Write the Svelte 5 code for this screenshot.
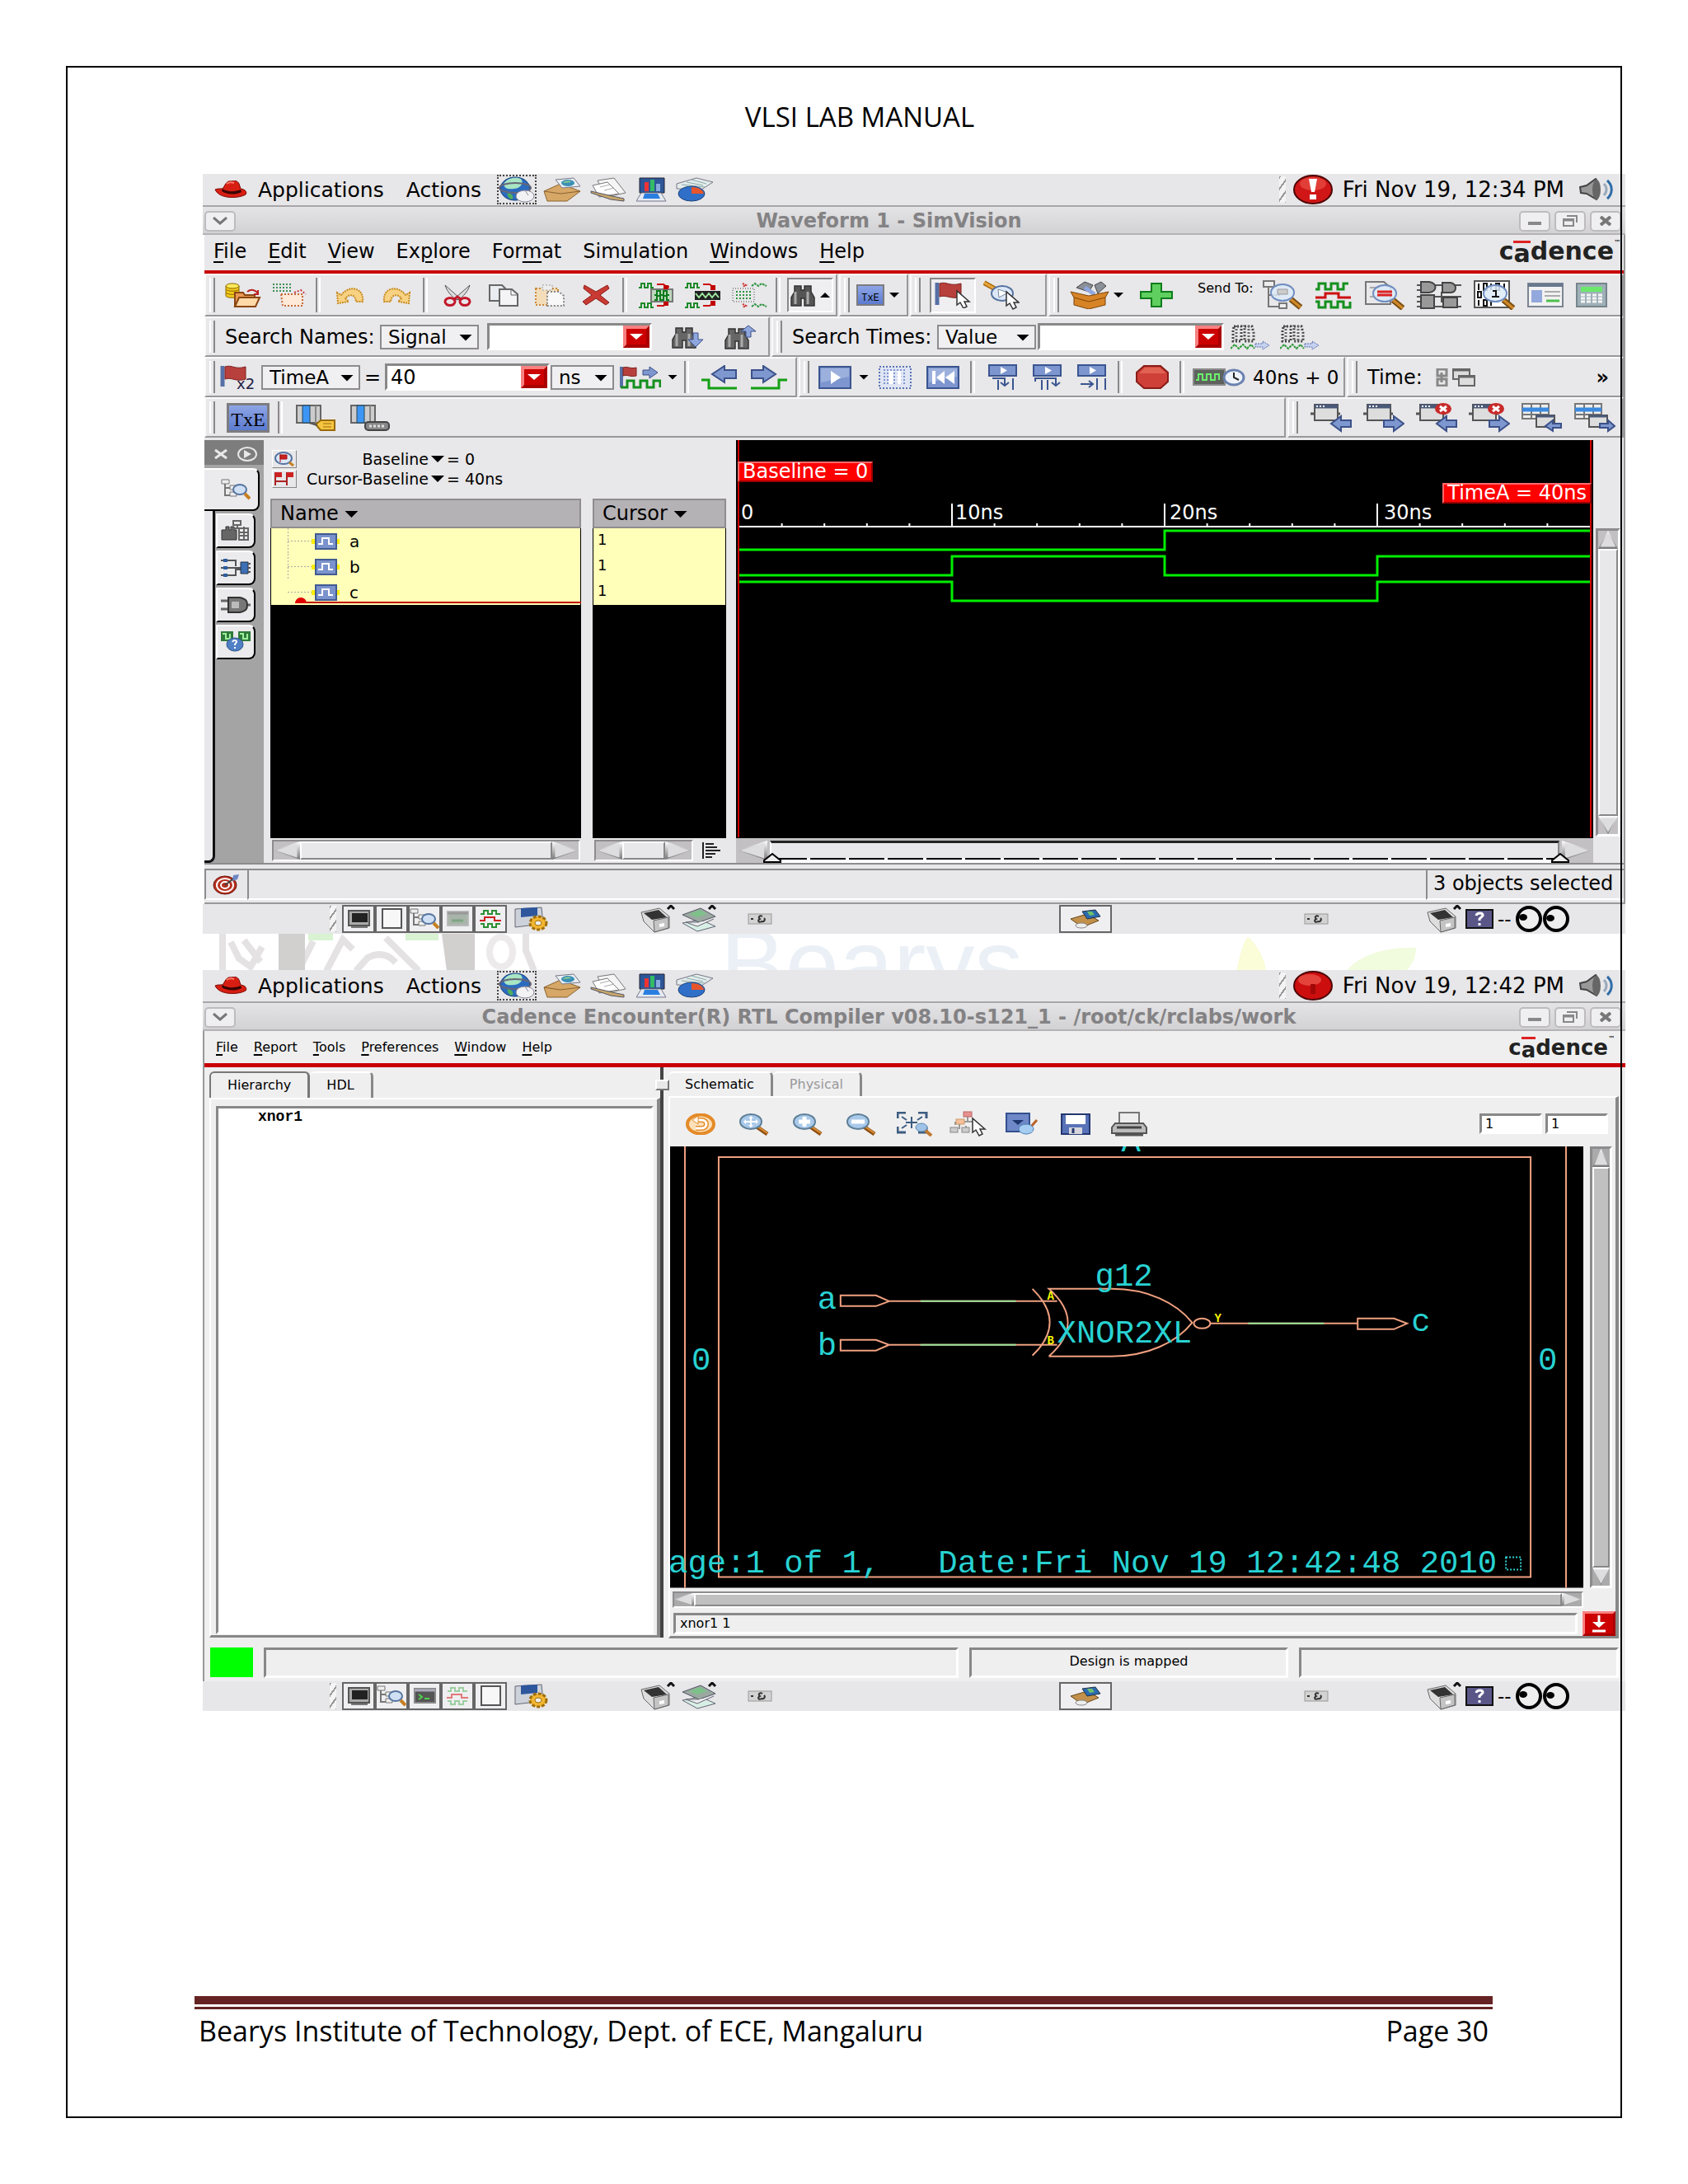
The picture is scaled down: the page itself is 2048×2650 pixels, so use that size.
<script>
  const wave = (x, y, c) => `<path d="M${x} ${y}h4v-7h8v7h7v-7h8v7h7v-7h6" fill="none" stroke="${c}" stroke-width="3"/>`;
  const miniWave = (x, y, c) => `<path d="M${x} ${y}h3v-5h4v5h4v-5h4v5h3" fill="none" stroke="${c}" stroke-width="2"/>`;
  const arrowR = (x, y) => `<path d="M${x} ${y + 5}h12v-5l12 9-12 9v-5h-12z" fill="#7f97cf" stroke="#3b5189" stroke-width="2"/>`;
  const arrowL = (x, y) => `<path d="M${x + 24} ${y + 5}h-12v-5l-12 9 12 9v-5h12z" fill="#7f97cf" stroke="#3b5189" stroke-width="2"/>`;
  const pointer = (x, y) => `<path d="M${x} ${y}v17l4-3 4 7 4-2-3-6h6z" fill="#fff" stroke="#333" stroke-width="1.5"/>`;
  const lens = (x, y) =>
    `<path d="M${x + 10} ${y + 8}l12 10" stroke="#7a4d12" stroke-width="7"/><path d="M${x + 10} ${y + 8}l12 10" stroke="#d08a2a" stroke-width="3"/><ellipse cx="${x}" cy="${y}" rx="14" ry="10" fill="#dceaf8" fill-opacity=".85" stroke="#6f8dc0" stroke-width="2"/>`;
  const binoculars = (c) =>
    `<path d="M5 3h8v5h4V3h8v7l4 7v10H17v-9h-4v9H1V17l4-7z" fill="${c}" stroke="#333" stroke-width="1.5"/><path d="M6 10v15M21 10v15" stroke="#aaa" stroke-width="3"/>`;
  const stepHead = `<rect x="1" y="1" width="33" height="13" fill="#7e96cf" stroke="#3a5590" stroke-width="2"/><path d="M15 3l8 4.5-8 4.5z" fill="#fff"/>`;
  const win = `<path d="M0 13h36" stroke="#555" stroke-width="3"/><rect x="5" y="2" width="28" height="19" fill="#ddd" stroke="#555" stroke-width="2"/><path d="M5 4h28" stroke="#4a5878" stroke-width="5"/><path d="M7 4h10" stroke="#fff" stroke-width="2" stroke-dasharray="2 2"/>`;
  const badge = `<ellipse cx="33" cy="7" rx="10" ry="7" fill="#c92a2a"/><path d="M29 4l8 6M37 4l-8 6" stroke="#fff" stroke-width="3"/>`;
  const tableWin = `<path d="M1 1h32v18H1zM1 14h32M12 1v18M23 1v18" fill="#eee" stroke="#777" stroke-width="2"/><path d="M1 8h32" stroke="#3b8ae0" stroke-width="5"/><rect x="18" y="15" width="22" height="14" fill="#ddd" stroke="#555" stroke-width="2"/><path d="M18 16h22" stroke="#4a5878" stroke-width="3"/>`;
  const cols = `<path d="M1 1h29v21H1z" fill="#ccc" stroke="#666" stroke-width="2"/><path d="M24 1v21" stroke="#888" stroke-width="2"/><path d="M8 1h9v21H8z" fill="#3d96f5" stroke="#245" stroke-width="1"/>`;
  const magnifier = (inner) =>
    `<path d="M22 17l13 9" stroke="#8d4f10" stroke-width="5"/><path d="M22 16l13 9" stroke="#dd8f35" stroke-width="2"/><ellipse cx="15" cy="11" rx="13" ry="9" fill="#a9c9ea" stroke="#5e7f96" stroke-width="2"/>${inner}`;
  const tree = `<path d="M7 6v26h14M7 18h14" fill="none" stroke="#777" stroke-width="2"/><rect x="1" y="1" width="13" height="7" fill="#eee" stroke="#777" stroke-width="2"/><rect x="20" y="28" width="9" height="6" fill="#eee" stroke="#777" stroke-width="2"/>`;

  // name: [width, height, shapes]
  const icons = {
    hat: [40, 22, `<path d="M1 11c4-2 8 0 10-2 3-6 5-9 10-8 3-2 8 0 9 3l2 6c6 1 8 4 6 7-8 5-32 6-37-6z" fill="#d81e12" stroke="#7c0a04"/><path d="M10 10c5 4 15 4 22 1l1 3c-8 4-18 3-24-1z" fill="#3a0502"/><path d="M15 4c3-2 6-2 9-1" stroke="#ff7a6a" stroke-width="2" fill="none"/>`],
    globe: [44, 32, `<ellipse cx="20" cy="15" rx="18" ry="14" fill="#2b6cc0" stroke="#123d77"/><path d="M6 9C10 2 20 0 27 3c4 5 0 11-8 12S7 15 6 9z" fill="#a8e6c4"/><path d="M11 20c6 1 8 5 5 8-4-1-6-5-5-8z" fill="#4fae5c"/><ellipse cx="20" cy="14" rx="19" ry="6" fill="none" stroke="#667" stroke-width="2"/><ellipse cx="32" cy="24" rx="11" ry="7" fill="#f2f2f5" stroke="#889"/><path d="M32 17l4 6" stroke="#889"/>`],
    mail: [48, 30, `<path d="M2 17l20-9 24 9-16 12-24 0z" fill="#d6a766" stroke="#8a6330"/><path d="M2 17l20 3 24-3" stroke="#8a6330" fill="none"/><path d="M16 3l22-2 8 10-22 2z" fill="#e8eef2" stroke="#778"/><ellipse cx="31" cy="7" rx="8" ry="4" fill="#3b8fb8"/><path d="M25 7c3-3 8-3 10-1z" fill="#8fd08a"/>`],
    writer: [48, 30, `<path d="M10 4l20-3 14 18-24 5z" fill="#f5f5f5" stroke="#777"/><path d="M4 10l18-4 14 14-24 4z" fill="#fff" stroke="#777"/><path d="M2 17l26 6 14 3v3l-16-2L2 19z" fill="#c8a86a" stroke="#556"/><path d="M13 12l12-3M18 16l12-3" stroke="#aaa"/>`],
    impress: [38, 30, `<path d="M4 1h30v18H4z" fill="#2d5698" stroke="#223"/><path d="M10 6h5v11h-5z" fill="#e33"/><path d="M17 3h5v14h-5z" fill="#3b6"/><path d="M24 8h5v9h-5z" fill="#8ad"/><path d="M6 19h24l6 10H0z" fill="#e4eaf2" stroke="#778"/><path d="M10 20h16l3 6H8z" fill="#2a7ee0"/>`],
    calc: [46, 30, `<path d="M2 8L26 1l20 5-14 9-30-1z" fill="#e4ecec" stroke="#778"/><path d="M8 9l28 3M14 6l20 4M20 3l18 5" stroke="#8aa"/><ellipse cx="20" cy="20" rx="16" ry="9" fill="#2f6fc8" stroke="#1c437a"/><path d="M20 20V12c8 0 14 3 15 8z" fill="#e8552b"/>`],
    alert: [48, 36, `<ellipse cx="24" cy="18" rx="23" ry="17" fill="#d01616" stroke="#4d0505" stroke-width="2"/><ellipse cx="24" cy="11" rx="16" ry="8" fill="#ee5a50" opacity=".6"/><path d="M19 5h10l-3 16h-4z" fill="#fff"/><rect x="20" y="24" width="8" height="6" fill="#fff"/>`],
    alertDim: [48, 36, `<ellipse cx="24" cy="18" rx="23" ry="17" fill="#cc0e0e" stroke="#4d0505" stroke-width="2"/><ellipse cx="20" cy="11" rx="14" ry="7" fill="#ee5a50" opacity=".7"/><path d="M21 16h6v12h-6z" fill="#a30808"/>`],
    speaker: [42, 28, `<path d="M1 11l8-2L20 1c4 4 5 20 1 25L9 19l-7-1z" fill="#999" stroke="#444" stroke-width="2"/><ellipse cx="21" cy="14" rx="5" ry="12" fill="#666"/><path d="M30 7c4 4 4 10 0 14" stroke="#9ab" stroke-width="3" fill="none"/><path d="M34 3c7 6 7 16 0 22" stroke="#2f6ca8" stroke-width="3" fill="none"/>`],
    openDb: [44, 30, `<path d="M1 4v12c0 3 16 3 16 0V4" fill="#f4c81a" stroke="#8a6a00"/><path d="M1 8c2 3 14 3 16 0M1 12c2 3 14 3 16 0" fill="none" stroke="#8a6a00"/><ellipse cx="9" cy="4" rx="8" ry="3" fill="#ffe95a" stroke="#8a6a00"/><path d="M12 12h10l2 3h12v13H12z" fill="#e89a55" stroke="#8a4512" stroke-width="2"/><path d="M17 18h25l-5 11H12z" fill="#ffd9a8" stroke="#8a4512" stroke-width="2"/><path d="M27 11c5-4 10-2 13 2m0-4v5h-5" stroke="#b22" stroke-width="2" fill="none"/>`],
    reload: [44, 30, `<path d="M2 2h22M2 6h22M2 10h22" stroke="#3f8f58" stroke-width="2" stroke-dasharray="2 2"/><path d="M12 14h26v14H14z" fill="#ffe9d8" stroke="#c86a3a" stroke-width="2" stroke-dasharray="2 2"/><path d="M28 12l8-3 6 5" stroke="#c33" stroke-width="2" stroke-dasharray="2 2" fill="none"/>`],
    undo: [36, 24, `<path d="M2 9l1 13 13-2-4-4c5-6 12-5 13 4h8C35 3 17-1 7 12z" fill="#f8d283" stroke="#c98c20" stroke-width="2" stroke-dasharray="2 1"/>`],
    redo: [36, 24, `<path d="M34 9l-1 13-13-2 4-4c-5-6-12-5-13 4H3C1 3 19-1 29 12z" fill="#f8d283" stroke="#c98c20" stroke-width="2" stroke-dasharray="2 1"/>`],
    cut: [34, 27, `<path d="M2 1l18 16-4 2C10 15 4 8 2 1zM32 1L14 17l4 2C24 15 30 8 32 1z" fill="#ddd" stroke="#555"/><ellipse cx="8" cy="21" rx="6" ry="4.5" fill="none" stroke="#c3182a" stroke-width="3"/><ellipse cx="26" cy="21" rx="6" ry="4.5" fill="none" stroke="#c3182a" stroke-width="3"/><path d="M13 18l4-3 4 3" stroke="#c3182a" stroke-width="3" fill="none"/>`],
    copy: [36, 27, `<path d="M1 1h15l5 5v14H1z" fill="#e9ecf0" stroke="#666" stroke-width="2"/><path d="M13 6h15l7 6v14H13z" fill="#f4f4f6" stroke="#666" stroke-width="2"/><path d="M27 6v7h8" fill="none" stroke="#666"/>`],
    paste: [36, 27, `<path d="M1 5h27v20H1z" fill="#f3dcb8" stroke="#c98a3a" stroke-width="2" stroke-dasharray="2 2"/><path d="M9 1h12v6H9z" fill="#eee" stroke="#999" stroke-dasharray="2 2"/><path d="M15 9h14l6 5v12H15z" fill="#f8f8f8" stroke="#888" stroke-width="2" stroke-dasharray="2 2"/>`],
    remove: [34, 26, `<path d="M3 1l14 8L31 1l2 4-11 8 11 9-4 3-12-8-12 8-4-4 11-8L2 5z" fill="#c83a32" stroke="#8c1d18"/>`],
    sendIn: [44, 32, `${miniWave(0, 7, '#1d8a2a')}${miniWave(0, 31, '#1d8a2a')}<rect x="15" y="9" width="26" height="15" fill="#bcd8bc" stroke="#777" stroke-width="2"/>${miniWave(19, 16, '#0a7a1a')}${miniWave(19, 22, '#0a7a1a')}<path d="M22 3h8l4 3h3M22 29h8l4-3" stroke="#c11" stroke-width="2" fill="none"/><path d="M30 4h6v5h-6zM30 24h6v5h-6z" fill="#c00000"/>`],
    sendOut: [44, 32, `${miniWave(0, 7, '#1d8a2a')}${miniWave(0, 31, '#1d8a2a')}<rect x="12" y="11" width="31" height="11" fill="#222"/><path d="M13 14l4 5 4-5 4 5 4-5 4 5 4-5 4 5" stroke="#9fe89f" stroke-width="2" fill="none"/><path d="M22 3h8l4 3M22 29h8l4-3" stroke="#c11" stroke-width="2" fill="none"/><path d="M31 4h6v6h-6zM31 23h6v6h-6z" fill="#c00000"/>`],
    sendDim: [44, 32, `<rect x="2" y="8" width="26" height="16" fill="none" stroke="#444" stroke-width="1" stroke-dasharray="1 2"/><path d="M6 12h20M6 16h20M6 20h20" stroke="#2c9440" stroke-width="2" stroke-dasharray="2 2"/><path d="M25 5l4-3 4 3 4-3 6 3M25 30l4-3 4 3 4-3 6 3" stroke="#2c9440" stroke-width="2" stroke-dasharray="3 1" fill="none"/><path d="M14 2l4 2-4 2M14 27l4 2-4 2" stroke="#c33" stroke-width="2" stroke-dasharray="2 1" fill="none"/>`],
    find: [30, 28, binoculars('#555')],
    findDown: [40, 28, `${binoculars('#666')}<path d="M26 9h6v8h6l-9 9-9-9h6z" fill="#8fa7dd" stroke="#3b5189"/>`],
    findUp: [40, 30, `<g transform="translate(0 2)">${binoculars('#666')}</g><path d="M26 15h6V8h6l-9-7-9 7h6z" fill="#8fa7dd" stroke="#3b5189"/>`],
    flagSel: [44, 32, `<path d="M3 1v27" stroke="#5670a5" stroke-width="5"/><path d="M6 2c8-3 12 4 26 0v16c-12 4-18-3-26 0z" fill="#b8403c" stroke="#7d2020"/>${pointer(27, 11)}`],
    lensSel: [44, 36, `<path d="M1 3l16 9" stroke="#a86a10" stroke-width="6"/><path d="M1 3l14 8" stroke="#e9a63a" stroke-width="3"/><ellipse cx="23" cy="16" rx="13" ry="9" fill="#dce8f8" stroke="#55739f" stroke-width="2"/><path d="M18 11l12 4-11 6z" fill="#fff" stroke="#789"/>${pointer(28, 14)}`],
    toolbox: [48, 34, `<path d="M8 8l10-7 10 4-5 8zM30 5l8-4 6 5-10 9z" fill="#8a8f98" stroke="#444"/><path d="M18 8l12 8" stroke="#8fa7e0" stroke-width="5"/><path d="M1 13l22 5 24-5-4 7v9l-20 5-18-5v-9z" fill="#d78427" stroke="#7d4508"/><path d="M5 20l18 5 20-5" stroke="#7d4508" fill="none"/>`],
    plus: [40, 30, `<path d="M14 1h12v10h13v8H26v10H14V19H1v-8h13z" fill="#5fcf5f" stroke="#0f7d1c" stroke-width="2"/>`],
    schemTree: [48, 36, `${tree}${lens(24, 15)}<path d="M18 11h12v6H18z" fill="#ccc" stroke="#999"/>`],
    waves: [46, 34, `${wave(1, 10, '#14901e')}<path d="M1 20h12v-5h16v5h15" fill="none" stroke="#cc1111" stroke-width="3"/><path d="M1 25h4v7h8v-7h7v7h8v-7h7v7h8v-7" fill="none" stroke="#14901e" stroke-width="3"/>`],
    docLens: [48, 36, `<path d="M1 2h22l8 7v20H1z" fill="#e8e8ea" stroke="#777" stroke-width="2"/><path d="M6 9h12M6 20h12" stroke="#aaa" stroke-width="2"/>${lens(24, 16)}<path d="M15 14h18M15 18h18" stroke="#d22" stroke-width="3"/>`],
    gates: [54, 34, `<path d="M0 5h54M0 11h20M0 19h54M0 25h20M0 31h54M30 13v13" stroke="#555" stroke-width="2"/><path d="M5 1h10c10 2 10 11 0 13H5zM31 2h10c8 2 8 11 0 12H31z" fill="#999" stroke="#444" stroke-width="2"/><path d="M5 17h16v16H5zM32 20h17v12H32z" fill="#999" stroke="#444" stroke-width="2"/>`],
    bits: [50, 36, `<rect x="1" y="1" width="42" height="32" fill="#fff" stroke="#555" stroke-width="2"/><path d="M6 4v8M12 4h4v8h-4zM21 4v8M27 4h4v8h-4zM37 4v8M5 14h4v7H5zM6 24v7M12 24h4v7h-4zM21 24v7" fill="none" stroke="#111" stroke-width="2"/>${lens(26, 16)}<path d="M23 13h4v7M22 20h9" stroke="#111" stroke-width="2" fill="none"/>`],
    form: [44, 30, `<rect x="1" y="1" width="42" height="28" fill="#f2f2f2" stroke="#7a8594" stroke-width="2"/><path d="M1 3h42" stroke="#68788e" stroke-width="4"/><rect x="5" y="9" width="13" height="15" fill="#93a8dc"/><path d="M21 11h19M21 16h19" stroke="#666"/><path d="M23 22h16" stroke="#4cc04c" stroke-width="3"/>`],
    pocketCalc: [38, 30, `<rect x="1" y="1" width="36" height="28" fill="#9fb0b8" stroke="#77858c" stroke-width="2"/><rect x="6" y="5" width="26" height="6" fill="#6be86b"/><path d="M6 15h26M6 19h26M6 23h26" stroke="#f4f4f4" stroke-width="3" stroke-dasharray="5 2"/>`],
    findDim: [48, 32, `<path d="M4 3h9v18H3V9zM17 3h9l2 8v10H17z" fill="none" stroke="#444" stroke-width="3" stroke-dasharray="2 2"/><path d="M7 2v18M22 2v18" stroke="#666" stroke-width="3" stroke-dasharray="2 2"/><path d="M0 30l5-5 5 5 5-5 5 5 5-5 4 5" stroke="#2b9a38" stroke-width="2" fill="none" stroke-dasharray="3 1"/><path d="M30 24h9v-3l8 5-8 5v-3h-9z" stroke="#5670b0" stroke-dasharray="2 1" fill="#c7d2f0"/>`],
    flag2: [32, 30, `<path d="M3 1v25" stroke="#5670a5" stroke-width="5"/><path d="M6 2c8-3 12 4 25 0v15c-12 4-17-3-25 0z" fill="#b8403c" stroke="#7d2020"/>`],
    flagWave: [50, 28, `<path d="M2 1v25" stroke="#5670a5" stroke-width="4"/><path d="M4 2c6-2 8 2 16 0v10c-8 2-10-2-16 0z" fill="#b8403c" stroke="#7d2020"/><path d="M28 5h8V1l10 7-10 7v-4h-8z" fill="#7f97cf" stroke="#3b5189"/><path d="M1 26h8v-8h8v8h8v-8h8v8h8v-8h8v8" stroke="#14901e" stroke-width="3" fill="none"/>`],
    edgeL: [44, 30, `<path d="M0 18h9v10h34" stroke="#12a012" stroke-width="3" fill="none"/><path d="M42 6H28V1L13 11l15 10v-5h14z" fill="#7f97cf" stroke="#3b5189" stroke-width="2"/>`],
    edgeR: [44, 30, `<path d="M0 28h34V18h10" stroke="#12a012" stroke-width="3" fill="none"/><path d="M1 6h14V1l15 10-15 10v-5H1z" fill="#7f97cf" stroke="#3b5189" stroke-width="2"/>`],
    play: [40, 28, `<rect x="1" y="1" width="38" height="26" fill="#7e96cf" stroke="#3a5590" stroke-width="2"/><path d="M3 3h34v10L3 20z" fill="#a9bae2" opacity=".7"/><path d="M15 6l12 8-12 8z" fill="#fff"/>`],
    pause: [40, 28, `<rect x="1" y="1" width="38" height="26" fill="#dfe5f4" stroke="#5a74b4" stroke-width="2" stroke-dasharray="2 2"/><path d="M6 5h28M6 9h28M6 13h28M6 17h28M6 21h28" stroke="#7e96cf" stroke-width="2" stroke-dasharray="2 2"/><path d="M15 6v16M25 6v16" stroke="#fff" stroke-width="5"/>`],
    rewind: [40, 28, `<rect x="1" y="1" width="38" height="26" fill="#7e96cf" stroke="#3a5590" stroke-width="2"/><path d="M3 3h34v10L3 20z" fill="#a9bae2" opacity=".7"/><path d="M9 6v16" stroke="#fff" stroke-width="4"/><path d="M22 6L12 14l10 8zM34 6l-11 8 11 8z" fill="#fff"/>`],
    stepIn: [36, 32, `${stepHead}<path d="M5 17h15v8m-5-3l5 4 5-4M12 19v12M30 17v14" stroke="#3a5590" stroke-width="2" fill="none"/>`],
    stepOver: [36, 32, `${stepHead}<path d="M3 21v-4h25v8m-5-3l5 4 5-4M11 19v12M18 19v12" stroke="#3a5590" stroke-width="2" fill="none"/>`],
    stepTo: [36, 32, `${stepHead}<path d="M4 24h14m-4-4l5 4-5 4M24 17v14M34 17v14" stroke="#3a5590" stroke-width="2" fill="none"/>`],
    stop: [40, 29, `<path d="M10 1h20l9 8v11l-9 8H10l-9-8V9z" fill="#cf4038" stroke="#8a1d18" stroke-width="2"/><path d="M11 3h18l8 7H4z" fill="#e8705f" opacity=".7"/>`],
    clock: [64, 24, `<rect x="1" y="2" width="38" height="19" fill="#5d625d" stroke="#8a8a8a" stroke-width="2"/><path d="M4 15h3V8h5v7h5V8h5v7h5V8h5v7" stroke="#6bf06b" stroke-width="2" fill="none"/><ellipse cx="50" cy="12" rx="12" ry="9" fill="#eef2fb" stroke="#6b82b0" stroke-width="3"/><path d="M50 6v6l6 3" stroke="#222" stroke-width="2" fill="none"/>`],
    links: [48, 22, `<path d="M2 1h11v8H2zM2 13h11v8H2zM7 5v12" fill="none" stroke="#888" stroke-width="3"/><rect x="21" y="1" width="20" height="12" fill="#ddd" stroke="#666" stroke-width="2"/><rect x="28" y="9" width="19" height="12" fill="#ddd" stroke="#666" stroke-width="2"/><path d="M21 2h20M28 10h19" stroke="#666" stroke-width="3"/>`],
    colTag: [48, 32, `${cols}<path d="M24 24l6-5h17v12H30z" fill="#f5c542" stroke="#9a6a08" stroke-width="2"/><path d="M16 22l10 3" stroke="#555" stroke-width="2"/><path d="M33 23h10M33 27h10" stroke="#9a6a08"/>`],
    colLabel: [48, 32, `${cols}<rect x="18" y="21" width="29" height="10" rx="4" fill="#888" stroke="#444" stroke-width="2"/><path d="M23 26h18" stroke="#ddd" stroke-width="3" stroke-dasharray="3 2"/>`],
    winL: [50, 36, `${win}${arrowL(25, 16)}`],
    winR: [50, 36, `${win}${arrowR(25, 16)}`],
    winXL: [50, 36, `${win}${badge}${arrowL(25, 16)}`],
    winXR: [50, 36, `${win}${badge}${arrowR(25, 16)}`],
    tabL: [50, 36, `${tableWin}<path d="M48 25H38v-4l-9 7 9 6v-4h10z" fill="#7f97cf" stroke="#3b5189" stroke-width="2"/>`],
    tabR: [50, 36, `${tableWin}<path d="M31 25h10v-4l8 7-8 6v-4H31z" fill="#7f97cf" stroke="#3b5189" stroke-width="2"/>`],
    sideTree: [36, 26, `<path d="M5 4v16h14M5 11h14" fill="none" stroke="#777" stroke-width="2"/><path d="M1 1h9v5H1zM11 8h8v5h-8zM11 16h8v5h-8z" fill="#eee" stroke="#777"/><ellipse cx="23" cy="13" rx="8" ry="6" fill="#cfe0f5" stroke="#55739f" stroke-width="2"/><path d="M29 18l6 6" stroke="#c77f1f" stroke-width="4"/>`],
    sideFind: [36, 26, `<path d="M1 12h5V8h4v4h2V8h4v4h3v12H1z" fill="#666" stroke="#333"/><path d="M15 1h9v5h-9zM20 6v4M12 10h16v-2M22 10h11v14H22zM22 15h11M22 19h11M28 10v14" fill="none" stroke="#666" stroke-width="2"/>`],
    sideNet: [36, 26, `<path d="M0 4h18v7M0 13h24M0 22h18v-7h6" stroke="#555" stroke-width="2" fill="none"/><path d="M3 2h5v4H3zM3 11h5v4H3zM3 20h5v4H3z" fill="#2e5e9e"/><path d="M24 6h9v14h-9z" fill="#3e6fb5" stroke="#234"/><path d="M33 8h3M33 13h3M33 18h3" stroke="#555" stroke-width="2"/>`],
    sideGate: [36, 20, `<path d="M0 5h10M0 15h10M31 10h5" stroke="#666" stroke-width="3"/><path d="M9 1h14c8 2 9 4 9 9s-1 7-9 9H9z" fill="#777" stroke="#333" stroke-width="2"/><rect x="13" y="6" width="9" height="8" fill="#bbb"/>`],
    sideHelp: [36, 28, `<rect x="0" y="1" width="15" height="12" fill="#2f7a3a"/><rect x="21" y="1" width="15" height="12" fill="#2f7a3a"/><path d="M2 4h4v6h5V4M23 4h4v6h5V4" stroke="#9df09d" fill="none" stroke-width="2"/><ellipse cx="17" cy="17" rx="10" ry="8" fill="#4f7fc4" stroke="#2d5488"/><path d="M14 14c1-3 6-2 5 0l-2 3v1M17 20v2" stroke="#fff" stroke-width="2" fill="none"/>`],
    zoomFlag: [26, 18, `<ellipse cx="12" cy="8" rx="10" ry="7" fill="#dce8f8" stroke="#55739f" stroke-width="2"/><path d="M8 3v10M8 4h8v5H8z" fill="#c22" stroke="#a11"/><path d="M19 13l5 4" stroke="#c77f1f" stroke-width="3"/>`],
    flags: [26, 18, `<path d="M2 1v16M16 1v16M2 12h14" stroke="#a22" stroke-width="2" fill="none"/><path d="M2 1h8v6H2zM16 1h8v6h-8z" fill="#c22"/>`],
    signal: [34, 20, `<path d="M0 7h4v6H0zM30 7h4v6h-4z" fill="#ffee00"/><rect x="5" y="1" width="25" height="18" fill="#7b93cc" stroke="#415a92" stroke-width="2"/><path d="M8 13h5V6h8v7h5" fill="none" stroke="#fff" stroke-width="2"/>`],
    scrollMode: [24, 20, `<path d="M1 0v20M4 2h10M4 6h14M4 10h18M4 14h12M4 18h8" stroke="#222" stroke-width="2"/>`],
    target: [34, 26, `<ellipse cx="15" cy="14" rx="14" ry="11" fill="#b5301f" stroke="#6d130b"/><ellipse cx="15" cy="14" rx="10" ry="8" fill="none" stroke="#fff" stroke-width="2"/><ellipse cx="15" cy="14" rx="5" ry="4" fill="none" stroke="#fff" stroke-width="2"/><path d="M15 14L28 4" stroke="#444" stroke-width="2"/><path d="M25 2l7-1-2 6-6 2z" fill="#6c86c4"/>`],
    term: [28, 22, `<rect x="2" y="1" width="25" height="18" fill="#aaa" stroke="#555" stroke-width="2"/><rect x="6" y="4" width="19" height="11" fill="#222"/><path d="M5 21h20" stroke="#777" stroke-width="2"/>`],
    page: [28, 26, `<rect x="3" y="1" width="23" height="23" fill="#f7f7f7" stroke="#555" stroke-width="2"/>`],
    termGreen: [28, 20, `<rect x="2" y="1" width="25" height="17" fill="#555" stroke="#888" stroke-width="2"/><path d="M2 3h25" stroke="#aab" stroke-width="3"/><path d="M7 8l4 3-4 3M14 13h6" stroke="#4fd14f" stroke-width="2" fill="none"/>`],
    termDim: [28, 20, `<rect x="2" y="1" width="25" height="17" fill="#a8b4aa" stroke="#bbb" stroke-width="2"/><path d="M2 3h25" stroke="#999" stroke-width="3"/><path d="M7 12h14" stroke="#7fa584" stroke-width="3"/>`],
    waveTask: [28, 24, `<path d="M2 6h4V2h5v4h5V2h5v4h5" stroke="#2a8f34" stroke-width="2" fill="none"/><path d="M1 14h6v-4h12v4h8" stroke="#c22" stroke-width="2" fill="none"/><path d="M2 18h4v4h5v-4h5v4h5v-4h5" stroke="#2a8f34" stroke-width="2" fill="none"/>`],
    waveDim: [28, 24, `<path d="M2 6h4V2h5v4h5V2h5v4h5" stroke="#9ccfa2" stroke-width="2" fill="none"/><path d="M1 14h6v-4h12v4h8" stroke="#e07a7a" stroke-width="2" fill="none"/><path d="M2 18h4v4h5v-4h5v4h5v-4h5" stroke="#9ccfa2" stroke-width="2" fill="none"/>`],
    gearDisk: [44, 30, `<path d="M3 3l32-2 2 20-34 4z" fill="#cdd2da" stroke="#667"/><path d="M10 2l20-1v10l-20 2z" fill="#2d569c"/><ellipse cx="31" cy="20" rx="10" ry="8" fill="#f2b632" stroke="#a06e08" stroke-width="3" stroke-dasharray="4 2"/><ellipse cx="31" cy="20" rx="4" ry="3" fill="#eee" stroke="#a06e08"/>`],
    drawer: [42, 34, `<path d="M1 9l22-5 12 10v14l-18 5L4 20z" fill="#ddd" stroke="#666"/><path d="M4 10l18-4 10 9-18 3z" fill="#333"/><path d="M16 19l18-4v13l-17 5z" fill="#c4c4c4" stroke="#666"/><path d="M23 23l6-1v4l-6 1z" fill="#fff"/><path d="M33 5l4-4 4 4" stroke="#111" stroke-width="3" fill="none"/>`],
    papers: [44, 34, `<path d="M2 22l22-4 18 8-22 6z" fill="#d8efe6" stroke="#667"/><path d="M2 12L24 4l18 10-20 7z" fill="#9aa8a0" stroke="#556"/><path d="M10 11l13-5 9 5-12 4z" fill="#7ec08a"/><path d="M22 21l-16 0 14 5 20-9" fill="#eee" stroke="#667"/><path d="M34 5l4-4 4 4" stroke="#111" stroke-width="3" fill="none"/>`],
    plug: [30, 14, `<rect x="1" y="1" width="28" height="12" fill="#d2d2d2" stroke="#999"/><path d="M4 7h3M18 4c-3-2-6 1-3 3-4 2-1 5 2 3 3 1 5-2 3-4" stroke="#333" stroke-width="2" fill="none"/>`],
    desk: [40, 24, `<path d="M2 12l20-6 14 8-20 8z" fill="#c2904a" stroke="#66471c"/><path d="M16 3l16-2 6 8-16 3z" fill="#2b6ab0" stroke="#234"/><path d="M22 3l6 0 3 4-6 1z" fill="#6fc06f"/><ellipse cx="15" cy="20" rx="7" ry="3" fill="#eee" stroke="#888"/>`],
    help: [34, 24, `<rect x="1" y="1" width="32" height="22" fill="#5a5788" stroke="#111" stroke-width="2"/><path d="M13 8c1-4 9-4 8 0l-4 4v2M17 17v3" stroke="#fff" stroke-width="3" fill="none"/>`],
    eyes: [66, 32, `<ellipse cx="16" cy="16" rx="14" ry="14" fill="#eee" stroke="#000" stroke-width="4"/><ellipse cx="49" cy="16" rx="14" ry="14" fill="#eee" stroke="#000" stroke-width="4"/><ellipse cx="9" cy="14" rx="5" ry="4"/><ellipse cx="42" cy="15" rx="5" ry="4"/>`],
    back: [36, 26, `<ellipse cx="18" cy="13" rx="16" ry="11.5" fill="#fbe0b8" stroke="#e48a28" stroke-width="4"/><path d="M13 8h6c8 0 8 10 0 10h-7" stroke="#e48a28" stroke-width="6" fill="none"/><path d="M13 8h6c8 0 8 10 0 10h-7" stroke="#fff" stroke-width="3" fill="none"/><path d="M15 3L8 8l7 5z" fill="#fff" stroke="#e48a28"/>`],
    zoomFit: [38, 28, magnifier('<path d="M8 11h14M15 6v10" stroke="#fff" stroke-width="2"/><path d="M12 7l3-3 3 3zM12 15l3 3 3-3zM9 8l-3 3 3 3zM21 8l3 3-3 3z" fill="#fff"/>')],
    zoomIn: [38, 28, magnifier('<path d="M8 11h14M15 5v12" stroke="#fff" stroke-width="5"/>')],
    zoomOut: [38, 28, magnifier('<path d="M7 11h16" stroke="#fff" stroke-width="5"/>')],
    zoomArea: [44, 30, `<path d="M1 8V1h10M26 1h10v7M36 18v7H26M11 25H1v-7" stroke="#3c5c80" stroke-width="3" fill="none"/><path d="M6 6l6 4M31 6l-6 4M6 20l6-4M18 6v14M11 13h14" stroke="#3c5c80" stroke-width="2"/><path d="M34 22l8 7" stroke="#c07830" stroke-width="4"/><ellipse cx="30" cy="19" rx="7" ry="5" fill="#9ec2e8" stroke="#5e88b0"/>`],
    hier: [46, 32, `<path d="M22 7v6M12 13h18M7 17v-4M12 14v8M20 18v4" stroke="#999" stroke-width="2"/><rect x="17" y="1" width="10" height="6" fill="#e89090" stroke="#b66"/><rect x="8" y="10" width="10" height="6" fill="#f5c09a" stroke="#c96"/><rect x="1" y="20" width="9" height="6" fill="#ccc" stroke="#888"/><rect x="15" y="20" width="9" height="6" fill="#ccc" stroke="#888"/>${pointer(28, 9)}`],
    probe: [40, 28, `<rect x="1" y="1" width="28" height="22" fill="#6f88c8" stroke="#33508f" stroke-width="2"/><path d="M8 9h14l-7 6z" fill="#1f376f"/><path d="M30 18l8-9" stroke="#b8622a" stroke-width="3"/><ellipse cx="25" cy="20" rx="9" ry="6" fill="#a5cdf2" stroke="#4b7fb3"/>`],
    save: [36, 26, `<rect x="1" y="1" width="34" height="24" fill="#5872b8" stroke="#24386e" stroke-width="2"/><rect x="6" y="2" width="24" height="11" fill="#fff"/><rect x="10" y="17" width="16" height="8" fill="#d6d6de"/><path d="M15 18v6" stroke="#24386e" stroke-width="3"/>`],
    print: [44, 30, `<path d="M10 1h24v14H10z" fill="#eee" stroke="#777" stroke-width="2"/><path d="M5 14h34l4 5v7H1v-7z" fill="#bbb" stroke="#555" stroke-width="2"/><path d="M7 19h30" stroke="#444" stroke-width="3"/><path d="M5 28h34" stroke="#555" stroke-width="3"/>`],
    down: [20, 22, `<path d="M10 1v9M2 20h16" stroke="#fff" stroke-width="3"/><path d="M2 9h16l-8 7z" fill="#fff"/>`],
    marker: [24, 12, `<path d="M12 1l10 8v2H2V9z" fill="#eee" stroke="#000" stroke-width="2"/>`],
    minimize: [16, 12, `<path d="M0 9h16" stroke="#888" stroke-width="4"/>`],
    restore: [18, 14, `<path d="M5 1h12v8" fill="none" stroke="#888" stroke-width="2"/><path d="M1 5h12v8H1z" fill="none" stroke="#888" stroke-width="2"/><path d="M1 6h12" stroke="#888" stroke-width="3"/>`],
    close: [14, 12, `<path d="M1 1l12 10M13 1L1 11" stroke="#777" stroke-width="4"/>`],
    chevron: [18, 10, `<path d="M1 1l8 7 8-7" stroke="#777" stroke-width="3" fill="none"/>`],
  };

  const fileTools = [
    ['openDb', 'reload'],
    ['undo', 'redo'],
    ['cut', 'copy', 'paste', 'remove'],
    ['sendIn', 'sendOut', 'sendDim'],
  ];
  const sendTo = ['schemTree', 'waves', 'docLens', 'gates', 'bits', 'form', 'pocketCalc'];
  const simMenu = ['_File', '_Edit', '_View', 'Ex_plore', 'For_mat', 'Sim_ulation', '_Windows', '_Help'];
  const rtlMenu = ['_File', '_Report', '_Tools', '_Preferences', '_Window', '_Help'];
  const sideTabs = ['sideTree', 'sideFind', 'sideNet', 'sideGate', 'sideHelp'];
  const signals = [
    { name: 'a', value: 1, levels: [0, 0, 1, 1] },
    { name: 'b', value: 1, levels: [0, 1, 0, 1] },
    { name: 'c', value: 1, levels: [1, 0, 0, 1] },
  ];
  const labels = ['0', '10ns', '20ns', '30ns'];
  const ticks = Array.from({ length: 20 }, (_, i) => i);

  // one step per 10ns, 100 units wide
  function trace(levels, row) {
    const y = (l) => 133 + row * 31 - l * 23;
    let d = '';
    levels.forEach((l, i) => {
      d += `${i ? 'L' : 'M'}${i * 100} ${y(l)}L${(i + 1) * 100} ${y(l)}`;
    });
    return d;
  }

  let time = $state('40');
  let nameQuery = $state('');
  let timeQuery = $state('');
  let object = $state('xnor1 1');
</script>

{#snippet icon(name)}
  <svg class="icon" width={icons[name][0]} height={icons[name][1]} viewBox="0 0 {icons[name][0]} {icons[name][1]}" aria-hidden="true">
    {@html icons[name][2]}
  </svg>
{/snippet}

{#snippet tool(name)}
  <button class="tool" aria-label={name}>{@render icon(name)}</button>
{/snippet}

{#snippet panel(clock, alert)}
  <header class="panel">
    <button class="flat apps">{@render icon('hat')}Applications</button>
    <button class="flat">Actions</button>
    <nav class="launchers">
      {#each ['globe', 'mail', 'writer', 'impress', 'calc'] as name}
        {@render tool(name)}
      {/each}
    </nav>
    <span class="grip"></span>
    {@render tool(alert)}
    <time>{clock}</time>
    {@render tool('speaker')}
  </header>
{/snippet}

{#snippet titlebar(title)}
  <div class="titlebar">
    <button class="wbtn" aria-label="Window menu">{@render icon('chevron')}</button>
    <h2>{title}</h2>
    <button class="wbtn" aria-label="Minimize">{@render icon('minimize')}</button>
    <button class="wbtn" aria-label="Restore">{@render icon('restore')}</button>
    <button class="wbtn" aria-label="Close">{@render icon('close')}</button>
  </div>
{/snippet}

{#snippet menu(items)}
  {#each items as item}
    {@const [pre, rest] = item.split('_')}
    <button class="flat">{pre}<u>{rest[0]}</u>{rest.slice(1)}</button>
  {/each}
  <span class="brand">c<span class="bar">a</span>dence<sup>™</sup></span>
{/snippet}

{#snippet combo(label, options)}
  <span class="combo">
    <select aria-label={label}>
      {#each options as o}<option>{o}</option>{/each}
    </select>
    <i class="caret"></i>
  </span>
{/snippet}

{#snippet taskbar(windows)}
  <footer class="taskbar">
    <div class="cell">
      <span class="grip"></span>
      {#each windows as name}
        <button class="task" aria-label={name}>{@render icon(name)}</button>
      {/each}
      {@render tool('gearDisk')}
    </div>
    <div class="cell wide">{@render tool('drawer')}{@render tool('papers')}<span class="push">{@render icon('plug')}</span></div>
    <div class="cell"><button class="task desk" aria-label="Show desktop">{@render icon('desk')}</button></div>
    <div class="cell">{@render icon('plug')}</div>
    <div class="cell tray">{@render tool('drawer')}{@render tool('help')}<span>--</span>{@render icon('eyes')}</div>
  </footer>
{/snippet}

{#snippet hscroll()}
  <div class="hscroll">
    <button class="arr left" aria-label="Scroll left"></button>
    <span class="thumb"></span>
    <button class="arr right" aria-label="Scroll right"></button>
  </div>
{/snippet}

{#snippet vscroll()}
  <div class="vscroll">
    <button class="arr up" aria-label="Scroll up"></button>
    <span class="thumb"></span>
    <button class="arr down" aria-label="Scroll down"></button>
  </div>
{/snippet}

<main>
  <article class="sheet">
    <h1>VLSI LAB MANUAL</h1>

    <section class="desktop">
      {@render panel('Fri Nov 19, 12:34 PM', 'alert')}
      {@render titlebar('Waveform 1 - SimVision')}
      <div class="sim">
        <nav class="menubar">{@render menu(simMenu)}</nav>

        <div class="bars first">
          <div class="group files">
            {#each fileTools as set}
              {#each set as name}{@render tool(name)}{/each}
              <i class="sep"></i>
            {/each}
            <button class="tool sunken" aria-label="find">{@render icon('find')}<i class="caret small up"></i></button>
          </div>
          <div class="group txe-group">
            <button class="tool txe small" aria-label="Expressions">TxE</button><i class="caret small"></i>
          </div>
          <div class="group select-group">
            <button class="tool sunken" aria-label="Select">{@render icon('flagSel')}</button>
            {@render tool('lensSel')}
          </div>
          <div class="group grow">
            {@render tool('toolbox')}<i class="caret small"></i>
            {@render tool('plus')}
            <div class="send">
              <span>Send To:</span>
              {#each sendTo as name}{@render tool(name)}{/each}
            </div>
          </div>
        </div>

        <div class="bars">
          <div class="group search">
            <label for="names">Search Names:</label>
            {@render combo('Search names by', ['Signal', 'Scope'])}
            <span class="field"><input id="names" bind:value={nameQuery} /><button class="drop" aria-label="History"></button></span>
            {@render tool('findDown')}{@render tool('findUp')}
          </div>
          <div class="group grow search">
            <label for="times">Search Times:</label>
            {@render combo('Search times by', ['Value', 'Edge'])}
            <span class="field"><input id="times" bind:value={timeQuery} /><button class="drop" aria-label="History"></button></span>
            {@render tool('findDim')}{@render tool('findDim')}
          </div>
        </div>

        <div class="bars">
          <div class="group time">
            <span class="flagx">{@render icon('flag2')}<b>x2</b></span>
            {@render combo('Cursor', ['TimeA', 'Baseline'])}
            <label for="time">=</label>
            <span class="field"><input id="time" bind:value={time} /><button class="drop" aria-label="History"></button></span>
            {@render combo('Unit', ['ns', 'ps', 'us'])}
            {@render tool('flagWave')}<i class="caret small"></i>
            <i class="sep"></i>
            {@render tool('edgeL')}{@render tool('edgeR')}
          </div>
          <div class="group run">
            {@render tool('play')}<i class="caret small"></i>
            {@render tool('pause')}{@render tool('rewind')}
            <i class="sep"></i>
            {@render tool('stepIn')}{@render tool('stepOver')}{@render tool('stepTo')}
            <i class="sep"></i>
            {@render tool('stop')}
            <i class="sep"></i>
            {@render icon('clock')}<span class="now">40ns + 0</span>
          </div>
          <div class="group grow clockbar">
            <span>Time:</span>
            {@render tool('links')}
            <button class="flat more">»</button>
          </div>
        </div>

        <div class="bars">
          <div class="group grow tags">
            <button class="tool txe" aria-label="Transactions">TxE</button>
            <i class="sep"></i>
            {@render tool('colTag')}{@render tool('colLabel')}
          </div>
          <div class="group wins">
            {#each ['winL', 'winR', 'winXL', 'winXR', 'tabL', 'tabR'] as name}{@render tool(name)}{/each}
          </div>
        </div>

        <div class="viewer">
          <aside class="side">
            <div class="side-head">
              <svg width="60" height="20" viewBox="0 0 60 20" aria-hidden="true">
                <path d="M5 5l14 10M19 5L5 15" stroke="#e8e8e8" stroke-width="3" />
                <ellipse cx="44" cy="10" rx="11" ry="8" fill="none" stroke="#e8e8e8" stroke-width="2" />
                <path d="M40 5l9 5-9 5z" fill="#e8e8e8" />
              </svg>
            </div>
            <div class="side-tabs">
              {#each sideTabs as name, i}
                <button class="side-tab" class:on={i === 0} aria-label={name}>{@render icon(name)}</button>
              {/each}
              <div class="side-rest"></div>
            </div>
          </aside>

          <div class="lists">
            <div class="base">
              {@render tool('zoomFlag')}<span class="lab">Baseline</span><i class="caret"></i><span>= 0</span>
              {@render tool('flags')}<span class="lab">Cursor-Baseline</span><i class="caret"></i><span>= 40ns</span>
            </div>
            <div class="cols">
              <div class="pane name">
                <table>
                  <thead><tr><th>Name <i class="caret"></i></th></tr></thead>
                  <tbody>
                    {#each signals as s, i}
                      <tr><td><span class="branch" class:last={i === 2}></span>{@render icon('signal')}<span>{s.name}</span></td></tr>
                    {/each}
                  </tbody>
                </table>
                <div class="insert"></div>
              </div>
              <div class="pane cursor">
                <table>
                  <thead><tr><th>Cursor <i class="caret"></i></th></tr></thead>
                  <tbody>
                    {#each signals as s}<tr><td>{s.value}</td></tr>{/each}
                  </tbody>
                </table>
              </div>
            </div>
            <div class="scrolls">
              {@render hscroll()}
              {@render hscroll()}
              {@render icon('scrollMode')}
            </div>
          </div>

          <div class="waves">
            <div class="plot">
              <svg class="traces" viewBox="0 0 400 482" preserveAspectRatio="none">
                <path d="M0 105H400" stroke="#fff" stroke-width="2" vector-effect="non-scaling-stroke" />
                {#each ticks as t}
                  <path d="M{t * 20} 105V{t % 5 ? 101 : t ? 77 : 105}" stroke="#fff" stroke-width="2" vector-effect="non-scaling-stroke" />
                {/each}
                {#each signals as s, i}
                  <path d={trace(s.levels, i)} fill="none" stroke="#00ee00" stroke-width="3" vector-effect="non-scaling-stroke" />
                {/each}
              </svg>
              <span class="flag baseline">Baseline = 0</span>
              <span class="flag timea">TimeA = 40ns</span>
              {#each labels as l, i}<span class="tick" style="left: {i * 25}%">{l}</span>{/each}
            </div>
            <div class="range">
              <button class="arr left" aria-label="Scroll left"></button>
              <span class="thumb"></span>
              <button class="arr right" aria-label="Scroll right"></button>
              <span class="mark from">{@render icon('marker')}</span>
              <span class="mark to">{@render icon('marker')}</span>
            </div>
          </div>
          {@render vscroll()}
        </div>

        <div class="status">
          {@render tool('target')}
          <span>3 objects selected</span>
        </div>
      </div>
      {@render taskbar(['term', 'page', 'sideTree', 'termDim', 'waveTask'])}
    </section>

    <svg class="watermark" width="100%" height="44" viewBox="0 0 1726 44" preserveAspectRatio="xMinYMin slice" aria-hidden="true">
      <path d="M24 0v45M34 10l10 20 14 10 14-24M50 8l20 26M116 45l18-36M150 45l20-38 12 12M186 45l14-16q20-10 34 6M262 45l-40-40M392 0v20l10 25" fill="none" stroke="#e4e2e2" stroke-width="8" />
      <ellipse cx="362" cy="22" rx="14" ry="18" fill="none" stroke="#eceaea" stroke-width="8" />
      <path d="M92 0h32v45H92zM290 0h40v45h-34z" fill="#d2cfcf" />
      <path d="M128 0h30v8h-30zM246 0h40v8h-40z" fill="#d8f2d2" />
      <text x="628" y="78">Bearys</text>
      <path d="M1254 45c4-16 6-30 14-42 12 12 20 26 22 42z" fill="#fbfcd8" />
      <path d="M1388 45c10-14 40-30 84-28 0 10-4 20-12 28z" fill="#f1fbde" />
    </svg>

    <section class="desktop">
      {@render panel('Fri Nov 19, 12:42 PM', 'alertDim')}
      {@render titlebar('Cadence Encounter(R) RTL Compiler v08.10-s121_1 - /root/ck/rclabs/work')}
      <div class="rtl">
        <nav class="menubar">{@render menu(rtlMenu)}</nav>
        <div class="split">
          <div class="left">
            <div class="tabs"><button class="tab on">Hierarchy</button><button class="tab">HDL</button></div>
            <div class="box"><ul><li>xnor1</li></ul></div>
          </div>
          <div class="right">
            <div class="tabs"><button class="tab">Schematic</button><button class="tab" disabled>Physical</button></div>
            <div class="box">
              <div class="schem-tools">
                {#each ['back', 'zoomFit', 'zoomIn', 'zoomOut', 'zoomArea', 'hier', 'probe', 'save', 'print'] as name}{@render tool(name)}{/each}
                <input class="first" aria-label="Page" value="1" />
                <input aria-label="Pages" value="1" />
              </div>
              <div class="canvas-row">
                <svg class="schematic" viewBox="0 0 1109 536">
                  <rect width="1109" height="536" fill="#000" />
                  <g fill="none" stroke="#f0a080" stroke-width="2">
                    <path d="M18 0v536M1088 0v536M59 13h986v510H59z" />
                    <path d="M207 181h43l16 7-16 6h-43zM207 235h43l16 6-16 7h-43zM266 188h204M266 241h204" />
                    <path d="M440 173Q482 214 440 254M460 255Q506 214 460 173H536C580 173 615 190 634 214C615 238 580 255 536 255H460" />
                    <ellipse cx="646" cy="215" rx="10" ry="6" />
                    <path d="M656 215h179M835 209h44l16 6-16 7h-44z" />
                  </g>
                  <path d="M304 188h116M304 241h116M702 215h92" stroke="#98e098" stroke-width="2" />
                  <g class="net">
                    <text x="548" y="6">A</text>
                    <text x="26" y="271">0</text>
                    <text x="1054" y="271">0</text>
                    <text x="179" y="197">a</text>
                    <text x="179" y="253">b</text>
                    <text x="900" y="224">c</text>
                    <text x="516" y="169">g12</text>
                    <text x="470" y="238">XNOR2XL</text>
                    <text x="-2" y="517">age:1 of 1,   Date:Fri Nov 19 12:42:48 2010</text>
                  </g>
                  <rect x="1015" y="499" width="18" height="15" fill="none" stroke="#30d0d0" stroke-width="2" stroke-dasharray="2 2" />
                  <g class="pin">
                    <text x="458" y="186">A</text>
                    <text x="458" y="240">B</text>
                    <text x="661" y="213">Y</text>
                  </g>
                </svg>
                {@render vscroll()}
              </div>
              {@render hscroll()}
              <div class="object">
                <input aria-label="Object" bind:value={object} />
                <button class="drop" aria-label="Download">{@render icon('down')}</button>
              </div>
            </div>
          </div>
        </div>
        <div class="mapped">
          <span class="led"></span>
          <output></output>
          <output class="mid">Design is mapped</output>
          <output class="mid"></output>
        </div>
      </div>
      {@render taskbar(['term', 'sideTree', 'termGreen', 'waveDim', 'page'])}
    </section>

    <footer class="foot">
      <span>Bearys Institute of Technology, Dept. of ECE, Mangaluru</span>
      <span>Page 30</span>
    </footer>
  </article>
</main>

<style>
  :global(body) {
    background: #fff;
  }
  main {
    padding: 80px;
    font-family: "DejaVu Sans", sans-serif;
    font-size: 24px;
    color: #000;
  }
  .sheet {
    position: relative;
    padding: 0 0 80px 166px;
  }
  /* the frame is drawn over the captures, which run past its right edge */
  .sheet::after {
    content: "";
    position: absolute;
    inset: 0;
    border: 2px solid #000;
    pointer-events: none;
  }
  h1 {
    margin: 0 128px 0 0;
    height: 131px;
    padding-top: 36px;
    box-sizing: border-box;
    text-align: center;
    font: 400 33px/52px "Open Sans", sans-serif;
  }
  button, input, select {
    font: inherit;
    color: inherit;
    box-sizing: border-box;
    margin: 0;
    padding: 0;
    border: 0;
    border-radius: 0;
    background: none;
    min-width: 0;
  }
  .icon {
    display: block;
    flex: none;
  }
  .desktop {
    margin-right: -4px;
  }
  .panel {
    display: flex;
    align-items: center;
    height: 40px;
    padding: 0 14px;
    box-sizing: border-box;
    background: #e7e6e8;
    border-bottom: 2px solid #a8a6a9;
    font-size: 25px;
  }
  .panel .apps {
    display: flex;
    align-items: center;
    gap: 13px;
    margin-right: 27px;
  }
  .launchers {
    display: flex;
    gap: 9px;
    margin-left: 21px;
  }
  .launchers .tool:first-child {
    outline: 2px dotted #444;
  }
  .grip {
    width: 8px;
    height: 32px;
    background: repeating-linear-gradient(125deg, #999 0 2px, #f4f4f4 2px 8px);
  }
  .panel .grip {
    margin: 0 9px 0 auto;
  }
  .panel time {
    margin: 0 18px 0 12px;
    font-size: 26px;
  }
  .titlebar {
    display: flex;
    align-items: center;
    gap: 5px;
    height: 34px;
    padding: 2px 5px 0 2px;
    box-sizing: border-box;
    background: linear-gradient(#e4e3e5, #d2d1d3);
    border-bottom: 2px solid #b4b2b5;
  }
  h2 {
    flex: 1;
    margin: 0;
    padding-left: 28px;
    text-align: center;
    font-size: 24px;
    line-height: 30px;
    color: #838284;
    white-space: nowrap;
  }
  .wbtn {
    display: grid;
    place-items: center;
    width: 38px;
    height: 25px;
    border: 2px solid #bdbbbe;
    border-radius: 5px;
    background: #efeef0;
  }
  .sim {
    background: #e8e7e9;
    margin-left: 2px;
    border-right: 2px solid #999;
  }
  .menubar {
    display: flex;
    align-items: center;
    gap: 26px;
    height: 47px;
    padding: 0 4px 3px 11px;
    box-sizing: border-box;
    border-bottom: 4px solid #c80004;
  }
  .menubar u {
    text-underline-offset: 4px;
    text-decoration-thickness: 2px;
  }
  .brand {
    margin-left: auto;
    font-weight: bold;
    font-size: 30px;
    line-height: 32px;
    color: #222;
    display: flex;
  }
  .brand .bar {
    border-top: 3px solid #d22;
    height: 24px;
    line-height: 26px;
    margin-top: 3px;
  }
  .brand sup {
    font-size: 8px;
    line-height: 12px;
  }
  .bars {
    display: flex;
    height: 49px;
    gap: 2px;
  }
  .bars.first {
    height: 52px;
  }
  .group {
    display: flex;
    align-items: center;
    box-sizing: border-box;
    border: 2px solid #fafafa;
    border-right-color: #99979a;
    border-bottom-color: #99979a;
    padding-left: 4px;
    flex: none;
  }
  .group::before {
    content: "";
    flex: none;
    align-self: stretch;
    width: 3px;
    margin: 3px 14px 3px 0;
    border-left: 2px solid #fff;
    border-right: 2px solid #888;
  }
  .group.grow {
    flex: 1;
  }
  .sep {
    flex: none;
    align-self: stretch;
    width: 2px;
    margin: 3px 12px 3px 4px;
    border-left: 2px solid #8a888b;
    border-right: 2px solid #fff;
    box-sizing: content-box;
  }
  .tool {
    display: flex;
    align-items: center;
    justify-content: center;
    flex: none;
  }
  .caret {
    display: inline-block;
    flex: none;
    width: 16px;
    height: 8px;
    background: #000;
    clip-path: polygon(0 0, 100% 0, 50% 100%);
  }
  .caret.small {
    width: 12px;
    height: 6px;
  }
  .caret.up {
    clip-path: polygon(50% 0, 100% 100%, 0 100%);
  }
  .files {
    width: 768px;
  }
  .files::before {
    margin-right: 6px;
  }
  .files .tool {
    width: 56px;
    height: 42px;
  }
  .files .sep {
    margin-right: 8px;
  }
  .sunken {
    gap: 6px;
    border: 2px solid #888;
    border-right-color: #fff;
    border-bottom-color: #fff;
    background: #efeef0;
  }
  .txe-group {
    width: 84px;
    gap: 6px;
  }
  .txe-group::before {
    margin-right: 2px;
  }
  .txe {
    width: 52px;
    height: 36px;
    align-items: flex-end;
    border: 3px solid #7c7c80;
    background: linear-gradient(#8ea5e6, #5b7bd0);
    font: 24px/26px "Liberation Serif", serif;
  }
  .txe.small {
    width: 34px;
    height: 26px;
    font: 12px/14px "Liberation Mono", monospace;
    border-width: 2px;
  }
  .select-group {
    width: 166px;
    gap: 9px;
  }
  .select-group::before {
    margin-right: 2px;
  }
  .select-group .sunken {
    width: 56px;
    height: 43px;
  }
  .first .grow {
    gap: 5px;
  }
  .first .grow::before {
    margin-right: 8px;
  }
  .first .grow .caret + .tool {
    margin-left: 15px;
  }
  .send {
    flex: 1;
    display: flex;
    align-items: center;
    justify-content: space-between;
    padding: 0 18px 0 25px;
  }
  .send span {
    align-self: flex-start;
    margin-right: -4px;
    font-size: 16px;
  }
  .combo {
    position: relative;
    display: inline-flex;
    flex: none;
  }
  .combo select {
    appearance: none;
    width: 120px;
    height: 30px;
    padding-left: 8px;
    border: 2px solid #8d8b8e;
    background: #f0eff1;
    font-size: 23px;
  }
  .combo .caret {
    position: absolute;
    right: 8px;
    top: 12px;
    pointer-events: none;
  }
  .field {
    display: flex;
    flex: none;
    width: 200px;
    height: 33px;
    box-sizing: border-box;
    border: 3px solid #888;
    border-right-color: #fff;
    border-bottom-color: #fff;
    background: #fff;
  }
  .field input {
    flex: 1;
    padding-left: 4px;
    outline: 0;
  }
  .drop {
    display: grid;
    place-items: center;
    width: 32px;
    background: #cc0000;
    border: 4px solid #f88080;
    border-right-color: #a00;
    border-bottom-color: #a00;
  }
  .field .drop::before {
    content: "";
    width: 16px;
    height: 7px;
    background: #fff;
    clip-path: polygon(0 0, 100% 0, 50% 100%);
  }
  .search:first-child {
    width: 686px;
  }
  .search::before {
    margin-right: 12px;
  }
  .search label {
    width: 188px;
    flex: none;
    white-space: nowrap;
  }
  .search .field {
    margin: 0 24px 0 10px;
  }
  .search .tool + .tool {
    margin-left: 24px;
  }
  .search.grow label {
    width: 176px;
  }
  .search.grow .field {
    width: 226px;
    margin: 0 8px 0 2px;
  }
  .search.grow .tool + .tool {
    margin-left: 12px;
  }
  .time {
    width: 719px;
  }
  .time::before {
    margin-right: 6px;
  }
  .flagx {
    display: flex;
    align-items: flex-end;
    width: 50px;
  }
  .flagx b {
    margin-left: -12px;
    font-size: 18px;
    line-height: 14px;
    font-weight: 400;
    color: #224;
  }
  .time label {
    width: 30px;
    text-align: center;
  }
  .time .field {
    margin-right: 1px;
  }
  .time .field + :global(.combo select) {
    width: 77px;
  }
  .time > .tool {
    margin-left: 7px;
  }
  .time .field + .combo select {
    width: 77px;
  }
  .time > .caret {
    margin: 0 4px 0 8px;
  }
  .time > .sep + .tool {
    margin-left: 3px;
  }
  .time > .tool:last-child {
    margin-left: 16px;
  }
  .run {
    width: 663px;
    gap: 9px;
  }
  .run::before {
    margin-right: 2px;
  }
  .run .caret + .tool {
    margin-left: 3px;
  }
  .run .tool + .tool {
    margin-left: 9px;
  }
  .run .sep {
    margin-right: 1px;
  }
  .run .sep + .tool {
    margin-left: 6px;
  }
  .now {
    font-size: 23px;
    white-space: nowrap;
  }
  .clockbar::before {
    margin-right: 12px;
  }
  .clockbar .tool {
    margin-left: 16px;
  }
  .clockbar .more {
    margin: 0 16px 0 auto;
    font-weight: bold;
  }
  .tags .txe {
    margin-right: 6px;
  }
  .tags .sep {
    margin-right: 16px;
  }
  .tags .tool + .tool {
    margin-left: 18px;
  }
  .wins {
    width: 408px;
    gap: 14px;
  }
  .wins::before {
    margin-right: 1px;
  }
  .viewer {
    display: flex;
    height: 513px;
    padding-top: 3px;
    border-bottom: 2px solid #8d8b8e;
  }
  .side {
    width: 72px;
    display: flex;
    flex-direction: column;
    background: #a4a4a4;
    flex: none;
  }
  .side-head {
    height: 30px;
    padding: 5px 0 0 8px;
    box-sizing: border-box;
    background: #7d7d7d;
  }
  .side-tabs {
    flex: 1;
    display: flex;
    flex-direction: column;
    gap: 3px;
    padding-top: 4px;
  }
  .side-tab {
    display: grid;
    place-items: center;
    flex: none;
    width: 48px;
    height: 42px;
    margin-left: 14px;
    border: 2px solid #000;
    border-left-color: #fff;
    border-top-color: #fff;
    border-radius: 0 8px 8px 0;
    background: #ebeaec;
  }
  .side-tab.on {
    width: 67px;
    height: 52px;
    margin-left: 0;
    padding-left: 10px;
    border-left: 0;
  }
  .side-rest {
    flex: 1;
    width: 13px;
    margin-top: -183px;
    border-right: 3px solid #111;
    border-bottom: 3px solid #111;
    border-radius: 0 0 8px 0;
    background: #e8e7e9;
    box-sizing: border-box;
  }
  .lists {
    display: flex;
    flex-direction: column;
    width: 553px;
    margin: 0 12px 0 8px;
    flex: none;
  }
  .base {
    display: grid;
    grid-template-columns: 32px 158px 22px auto;
    grid-auto-rows: 22px;
    row-gap: 2px;
    align-items: center;
    height: 71px;
    padding: 12px 0 0 2px;
    box-sizing: border-box;
    font-size: 19px;
    line-height: 22px;
    white-space: nowrap;
  }
  .base .lab {
    text-align: right;
  }
  .base .caret {
    justify-self: center;
  }
  .base .tool {
    width: 30px;
    height: 22px;
    border: 1px solid #fff;
    border-right-color: #888;
    border-bottom-color: #888;
  }
  .cols {
    flex: 1;
    display: flex;
    justify-content: space-between;
  }
  .pane {
    background: #000;
  }
  .pane.name {
    width: 377px;
  }
  .pane.cursor {
    width: 162px;
  }
  table {
    width: 100%;
    border-collapse: collapse;
  }
  th {
    height: 34px;
    box-sizing: border-box;
    padding: 0 10px;
    border: 2px solid #8f8d90;
    background: #b5b2b5;
    text-align: left;
    font-weight: 400;
    line-height: 28px;
  }
  th .caret {
    margin: 0 0 3px 0;
  }
  td {
    height: 31px;
    padding: 0 0 0 5px;
    background: #ffffb9;
    font-size: 18px;
    line-height: 28px;
    vertical-align: top;
  }
  .name td {
    display: flex;
    align-items: center;
    padding-left: 20px;
  }
  .name td span:last-child {
    margin-left: 12px;
    font-size: 20px;
  }
  .branch {
    width: 29px;
    height: 31px;
    background:
      linear-gradient(90deg, #aaa 50%, transparent 0) 0 15px / 4px 1px repeat-x,
      linear-gradient(#aaa 50%, transparent 0) 0 0 / 1px 4px repeat-y;
  }
  .branch.last {
    background:
      linear-gradient(90deg, #aaa 50%, transparent 0) 0 15px / 4px 1px repeat-x;
  }
  .insert {
    height: 2px;
    margin: -4px 0 0 30px;
    background: #c00000;
    position: relative;
  }
  .insert::before {
    content: "";
    position: absolute;
    left: 0;
    bottom: 0;
    width: 14px;
    height: 7px;
    border-radius: 7px 7px 0 0;
    background: #e00000;
  }
  .scrolls {
    display: flex;
    align-items: center;
    height: 30px;
  }
  .scrolls > .hscroll:first-child {
    margin: 0 17px 0 2px;
  }
  .hscroll {
    display: flex;
    width: 374px;
    height: 26px;
    box-sizing: border-box;
    border: 2px solid #8d8b8e;
    border-right-color: #fff;
    border-bottom-color: #fff;
    background: #c2c0c3;
  }
  .scrolls .hscroll + .hscroll {
    width: 120px;
    margin-right: 11px;
  }
  .thumb {
    flex: 1;
    border: 2px solid #fff;
    border-right-color: #888;
    border-bottom-color: #888;
    background: #e8e7e9;
  }
  .arr {
    flex: none;
    width: 32px;
    background: linear-gradient(#fff, #777);
  }
  .arr::before {
    content: "";
    display: block;
    width: 100%;
    height: 100%;
    background: #dddcde;
    transform: scale(0.8);
  }
  .arr.left, .arr.left::before {
    clip-path: polygon(0 50%, 100% 0, 100% 100%);
  }
  .arr.right, .arr.right::before {
    clip-path: polygon(0 0, 100% 50%, 0 100%);
  }
  .arr.up, .arr.up::before {
    clip-path: polygon(50% 0, 100% 100%, 0 100%);
  }
  .arr.down, .arr.down::before {
    clip-path: polygon(0 0, 100% 0, 50% 100%);
  }
  .vscroll {
    display: flex;
    flex-direction: column;
    width: 30px;
    box-sizing: border-box;
    border: 3px solid #8d8b8e;
    border-right-color: #fff;
    border-bottom-color: #fff;
    background: #c2c0c3;
    flex: none;
  }
  .vscroll .arr {
    width: auto;
    height: 22px;
  }
  .viewer > .vscroll {
    margin: 107px 4px 32px 3px;
  }
  .waves {
    flex: 1;
    min-width: 0;
    display: flex;
    flex-direction: column;
  }
  .plot {
    position: relative;
    flex: 1;
    padding: 0 2px;
    background: #000;
  }
  .traces {
    display: block;
    width: 100%;
    height: 482px;
    box-sizing: border-box;
    border: solid #d00000;
    border-width: 0 2px;
  }
  .flag {
    position: absolute;
    height: 25px;
    box-sizing: border-box;
    padding: 0 4px;
    border: 2px solid #ff6a6a;
    border-right-color: #900;
    border-bottom-color: #900;
    background: #f00;
    color: #fff;
    line-height: 21px;
  }
  .baseline {
    left: 2px;
    top: 26px;
  }
  .timea {
    right: 2px;
    top: 52px;
  }
  .tick {
    position: absolute;
    top: 75px;
    margin-left: 6px;
    line-height: 26px;
    color: #fff;
  }
  .range {
    position: relative;
    display: flex;
    height: 30px;
    box-sizing: border-box;
    padding: 3px 2px 0;
    background: #c2c0c3;
  }
  .range .arr {
    width: 36px;
    height: 24px;
  }
  .range .thumb {
    border-top: 3px solid #222;
    border-bottom: 4px solid #fff;
    background: linear-gradient(90deg, #000 92%, #fff 0) 0 100% / 47px 2px repeat-x, #e8e7e9;
    margin: 0 3px;
  }
  .mark {
    position: absolute;
    bottom: 0;
  }
  .mark.from {
    left: 32px;
  }
  .mark.to {
    right: 28px;
  }
  .status {
    display: flex;
    justify-content: space-between;
    height: 48px;
    padding: 5px 0 3px;
    box-sizing: border-box;
    border-bottom: 2px solid #999;
  }
  .status > * {
    border: 2px solid #8d8b8e;
    border-bottom-color: #fff;
    border-right: 0;
  }
  .status::before {
    content: "";
    order: 1;
    flex: 1;
    border: 2px solid #8d8b8e;
    border-bottom-color: #fff;
    border-right: 0;
  }
  .status .tool {
    width: 52px;
    border-right: 0;
  }
  .status span {
    order: 2;
    width: 240px;
    padding-left: 7px;
    box-sizing: border-box;
    line-height: 32px;
    white-space: nowrap;
  }
  .taskbar {
    display: grid;
    grid-template-columns: 377fr 508fr 297fr 149fr 241fr;
    height: 36px;
    padding-left: 154px;
    background: #e7e6e8;
  }
  .cell {
    display: flex;
    align-items: center;
    gap: 7px;
  }
  .task {
    display: grid;
    place-items: center;
    width: 40px;
    height: 34px;
    border: 2px solid #666;
    background: #efeef0;
  }
  .task + .task {
    margin-left: -7px;
  }
  .desk {
    width: 64px;
  }
  .push {
    margin-left: 30px;
  }
  .tray {
    gap: 5px;
    font-size: 23px;
  }
  .watermark {
    display: block;
  }
  .watermark text {
    font: 118px "Liberation Sans", sans-serif;
    fill: #eaf0f6;
  }
  .rtl {
    border-left: 2px solid #999;
    background: #efeff0;
    font-size: 16px;
  }
  .rtl .menubar {
    height: 44px;
    gap: 19px;
    padding: 0 13px 0 14px;
    border-bottom: 5px solid #c80004;
  }
  .rtl .menubar u {
    text-underline-offset: 3px;
  }
  .rtl .brand {
    font-size: 26px;
  }
  .split {
    display: flex;
    height: 692px;
    padding-right: 8px;
  }
  .left, .right {
    display: flex;
    flex-direction: column;
  }
  .split > .left {
    width: 557px;
    padding-left: 6px;
    box-sizing: border-box;
    border-right: 4px solid #444;
    flex: none;
    position: relative;
  }
  .split > .left::after {
    content: "";
    position: absolute;
    right: -11px;
    top: 15px;
    width: 17px;
    height: 13px;
    box-sizing: border-box;
    background: #e8e8e8;
    border: 2px solid #fff;
    border-right-color: #777;
    border-bottom-color: #777;
  }
  .split > .right {
    flex: 1;
    min-width: 0;
    padding-left: 6px;
  }
  .tabs {
    display: flex;
    height: 37px;
    padding-top: 5px;
    box-sizing: border-box;
  }
  .tab {
    padding: 0 20px;
    border-top: 2px solid #fff;
    border-right: 3px solid #888;
    border-radius: 6px 6px 0 0;
    line-height: 28px;
  }
  .tab.on {
    border: 2px solid #777;
    border-bottom: 0;
    border-right-width: 3px;
  }
  .tab:disabled {
    color: #999;
  }
  .box {
    flex: 1;
    display: flex;
    flex-direction: column;
    box-sizing: border-box;
    border: 2px solid #fff;
    border-right: 4px solid #888;
    border-bottom: 3px solid #888;
  }
  ul {
    flex: 1;
    list-style: none;
    margin: 8px 4px 1px 6px;
    padding: 0 0 0 48px;
    border: 3px solid #888;
    border-right-color: #fff;
    border-bottom-color: #fff;
    background: #fff;
    font: bold 18px/20px "Liberation Mono", monospace;
  }
  .schem-tools {
    display: flex;
    align-items: center;
    height: 59px;
    gap: 4px;
    padding: 4px 9px 0 6px;
    box-sizing: border-box;
  }
  .schem-tools .tool {
    width: 61px;
  }
  .schem-tools input {
    width: 76px;
    height: 25px;
    padding-left: 4px;
    border: 3px solid #888;
    border-right-color: #fff;
    border-bottom-color: #fff;
    background: #fff;
  }
  .schem-tools input.first {
    margin-left: auto;
  }
  .canvas-row {
    display: flex;
    justify-content: space-between;
    padding-right: 4px;
  }
  .schematic {
    display: block;
    flex: 1;
    min-width: 0;
    margin-right: 8px;
  }
  .rtl .vscroll {
    width: 27px;
    background: #aaa;
  }
  .rtl .thumb {
    background: #c0c0c0;
  }
  .net text {
    font: 39px "Liberation Mono", monospace;
    fill: #28d2d2;
    white-space: pre;
  }
  .pin text {
    font: bold 14px "Liberation Mono", monospace;
    fill: #f4f400;
  }
  .box > .hscroll {
    width: auto;
    height: 20px;
    margin: 4px 39px 4px 3px;
    background: #aaa;
    flex: none;
  }
  .box > .hscroll .arr {
    width: 24px;
  }
  .object {
    display: flex;
    align-items: center;
    gap: 6px;
  }
  .object input {
    flex: 1;
    height: 26px;
    margin-left: 4px;
    padding-left: 5px;
    border: 3px solid #888;
    border-right-color: #fff;
    border-bottom-color: #fff;
  }
  .object .drop {
    width: 40px;
    height: 30px;
    border-width: 3px;
  }
  .mapped {
    display: flex;
    align-items: center;
    gap: 13px;
    height: 53px;
    padding: 7px 8px 0 7px;
    box-sizing: border-box;
  }
  .led {
    width: 52px;
    height: 36px;
    background: #00ff00;
  }
  output {
    flex: 846;
    height: 37px;
    box-sizing: border-box;
    border: 3px solid #888;
    border-right-color: #fff;
    border-bottom-color: #fff;
    text-align: center;
    line-height: 28px;
  }
  output.mid {
    flex: 386;
  }
  .foot {
    display: flex;
    justify-content: space-between;
    margin: 346px 157px 0 -10px;
    padding: 0 5px;
    border-top: 16px double #652423;
    border-image: linear-gradient(#652423 0 10px, #fff 10px 13px, #652423 13px) 16 0 0 0;
    font: 34px/52px "Open Sans", sans-serif;
  }
</style>
